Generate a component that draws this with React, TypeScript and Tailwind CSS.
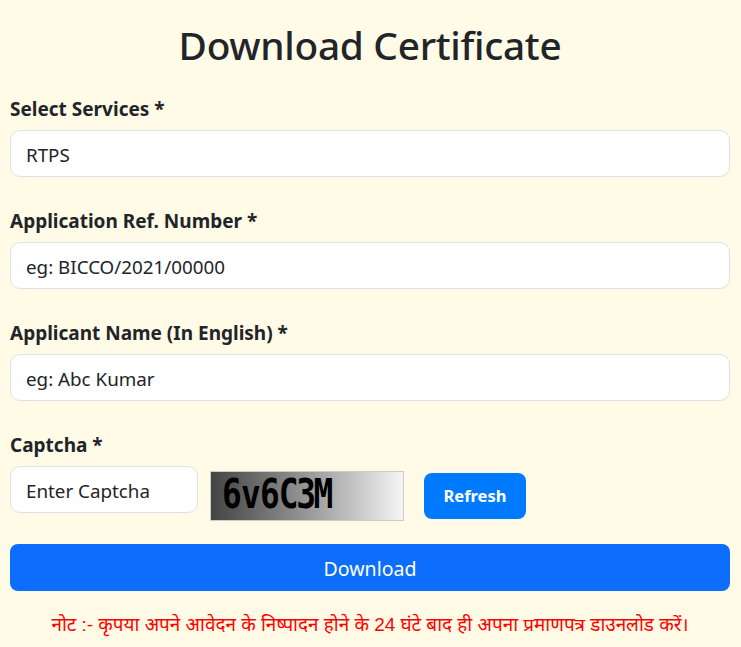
const font = "font-['Noto_Sans','Open_Sans',sans-serif]";

function Field({ label, value }: { label: string; value: string }) {
  return (
    <div className="mb-[30px]">
      <label className="block h-[27px] mb-[8px] text-[19px] leading-[29px] font-bold text-[#212529]">{label}</label>
      <div className="h-[47px] rounded-[10px] border border-[#dee2e6] bg-white px-[15px] text-[18.8px] leading-[48px] text-[#212529]">{value}</div>
    </div>
  );
}

export default function App() {
  return (
    <div className={`${font} w-[741px] h-[647px] overflow-hidden bg-[#fffbe6] pl-[10px] pr-[11px] pt-[20px]`}>
      <h1 className="h-[48px] mb-[27px] text-center text-[38.8px] leading-[50px] font-medium tracking-[-0.3px] text-[#212529]">Download Certificate</h1>
      <Field label="Select Services *" value="RTPS" />
      <Field label="Application Ref. Number *" value="eg: BICCO/2021/00000" />
      <Field label="Applicant Name (In English) *" value="eg: Abc Kumar" />
      <label className="block h-[27px] mb-[8px] text-[19px] leading-[29px] font-bold text-[#212529]">Captcha *</label>
      <div className="flex items-start h-[70px]">
        <div className="w-[188px] h-[47px] rounded-[10px] border border-[#dee2e6] bg-white px-[15px] text-[18.8px] leading-[48px] text-[#212529]">Enter Captcha</div>
        <div className="ml-[12px] mt-[5px] w-[194px] h-[50px] border border-[#cccccc] bg-gradient-to-r from-[#444444] to-[#f5f5f5] pl-[11px] font-['DejaVu_Sans_Mono',monospace] text-[41px] leading-[44px] font-bold text-black">
          <span className="inline-block origin-left scale-x-[0.8] tracking-[-1px] whitespace-nowrap">
            6v6<span className="tracking-[-3px]">C3</span>M
          </span>
        </div>
        <button className="ml-[20px] mt-[7px] w-[102px] h-[46px] rounded-[8px] bg-[#007bff] text-[16.5px] font-bold text-white">Refresh</button>
      </div>
      <button className="block w-full h-[47px] mt-[8px] rounded-[8px] bg-[#0d6efd] text-[19.5px] leading-[49px] text-white">Download</button>
      <p className="mt-[20px] text-center text-[18.9px] leading-[27px] text-[#ff0000] font-['Liberation_Sans','Noto_Sans',sans-serif]">नोट :- कृपया अपने आवेदन के निष्पादन होने के 24 घंटे बाद ही अपना प्रमाणपत्र डाउनलोड करें।</p>
    </div>
  );
}
